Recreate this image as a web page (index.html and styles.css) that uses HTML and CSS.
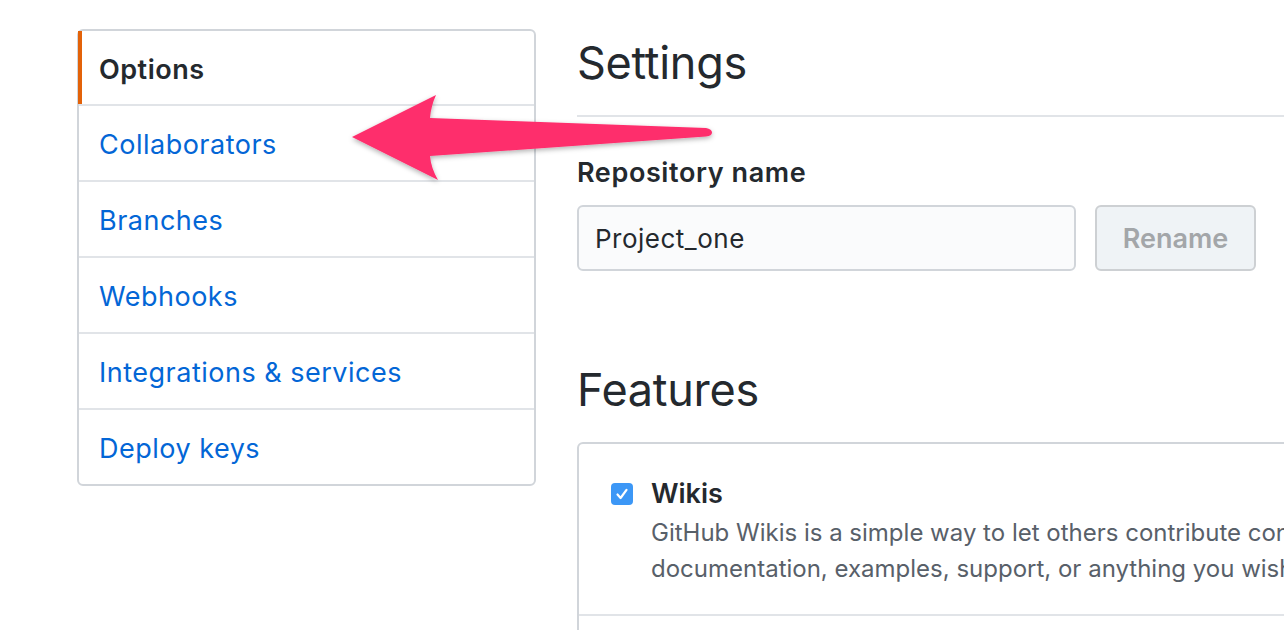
FILE: index.html
```html
<!DOCTYPE html>
<html>
<head>
<meta charset="utf-8">
<link rel="stylesheet" href="styles.css">
</head>
<body>
<div class="page">
  <nav class="menu">
    <a class="menu-item selected">Options</a>
    <a class="menu-item">Collaborators</a>
    <a class="menu-item">Branches</a>
    <a class="menu-item">Webhooks</a>
    <a class="menu-item">Integrations &amp; services</a>
    <a class="menu-item">Deploy keys</a>
  </nav>
  <main class="main">
    <h2 class="subhead">Settings</h2>
    <label class="label">Repository name</label>
    <div class="rename-row">
      <div class="input">Project_one</div>
      <div class="btn">Rename</div>
    </div>
    <h2 class="subhead spacious">Features</h2>
    <div class="box">
      <div class="box-row">
        <span class="checkbox">
          <svg width="22" height="22" viewBox="0 0 22 22"><rect width="22" height="22" rx="4" fill="#3c97f6"/><path d="M6.5 11.5 L9.6 15 L15.5 6.8" fill="none" stroke="#fff" stroke-width="2.2" stroke-linecap="round" stroke-linejoin="round"/></svg>
        </span>
        <div class="feature">
          <div class="feature-title">Wikis</div>
          <p class="feature-desc">GitHub Wikis is a simple way to let others contribute content. Any GitHub user can create and edit pages to use for<br>documentation, examples, support, or anything you wish.</p>
        </div>
      </div>
      <div class="box-row empty"></div>
    </div>
  </main>
</div>
<svg class="arrow" width="1284" height="630" viewBox="0 0 1284 630">
  <defs>
    <filter id="sh" x="-10%" y="-30%" width="120%" height="160%">
      <feDropShadow dx="0" dy="2" stdDeviation="2.5" flood-color="#000" flood-opacity="0.3"/>
    </filter>
  </defs>
  <path filter="url(#sh)" fill="#fe2d6c" d="M352,137 L436,95 Q431,106 430,118 L706,128 Q712,129 712,132.5 Q712,136 706,136.5 L430,156 Q431,168 438,180 Z"/>
</svg>
</body>
</html>
```

FILE: styles.css
```css
html, body {
  margin: 0;
  padding: 0;
  background: #fff;
  overflow: hidden;
}
body {
  width: 1284px;
  height: 630px;
  position: relative;
  font-family: Inter, "Noto Sans", "Liberation Sans", sans-serif;
  color: #24292e;
}
.page {
  display: flex;
  align-items: flex-start;
  padding: 29px 0 0 77px;
  gap: 41px;
  width: 2400px;
}
.menu {
  width: 459px;
  box-sizing: border-box;
  border: 2px solid #d1d5da;
  border-radius: 6px;
  display: flex;
  flex-direction: column;
  flex-shrink: 0;
}
.menu-item {
  display: flex;
  align-items: center;
  height: 74px;
  box-sizing: border-box;
  padding-left: 20px;
  padding-top: 3px;
  font-size: 27px;
  color: #0366d6;
  border-top: 2px solid #e1e4e8;
  letter-spacing: 0.5px;
  height: 76px;
}
.menu-item:first-child {
  border-top: none;
  height: 73px;
}
.menu-item.selected {
  font-weight: 600;
  color: #24292e;
  box-shadow: inset 4px 0 0 #e36209;
  margin-left: -1px;
  padding-left: 21px;
}
.main {
  width: 1400px;
  flex-shrink: 0;
}
.subhead {
  margin: 0;
  font-size: 45px;
  font-weight: 400;
  line-height: 60px;
  padding-top: 4px;
  padding-bottom: 22px;
  border-bottom: 2px solid #e1e4e8;
  letter-spacing: -0.3px;
}
.subhead.spacious {
  border-bottom: none;
  margin-top: 84px;
  padding-top: 5px;
  padding-bottom: 22px;
}
.label {
  display: block;
  margin-top: 35px;
  font-size: 27px;
  font-weight: 600;
  line-height: 42px;
  letter-spacing: 0.6px;
}
.rename-row {
  display: flex;
  gap: 19px;
  margin-top: 11px;
}
.input {
  width: 499px;
  height: 66px;
  box-sizing: border-box;
  border: 2px solid #d1d5da;
  border-radius: 6px;
  background: #fafbfc;
  padding-left: 16px;
  display: flex;
  align-items: center;
  font-size: 26px;
  letter-spacing: 0.5px;
  color: #24292e;
}
.btn {
  width: 161px;
  height: 66px;
  box-sizing: border-box;
  border: 2px solid #cdd0d3;
  border-radius: 6px;
  background: #eff3f6;
  display: flex;
  align-items: center;
  justify-content: center;
  font-size: 27px;
  font-weight: 600;
  color: #a3a6a9;
}
.box {
  width: 1400px;
  box-sizing: border-box;
  border: 2px solid #d1d5da;
  border-radius: 6px;
}
.box-row {
  display: flex;
  align-items: flex-start;
  gap: 18px;
  padding: 29px 32px 27px 32px;
  border-bottom: 2px solid #e1e4e8;
}
.box-row.empty {
  border-bottom: none;
  height: 80px;
}
.checkbox {
  display: flex;
  margin-top: 10px;
}
.feature-title {
  font-size: 27px;
  font-weight: 600;
  line-height: 42px;
}
.feature-desc {
  margin: 0;
  white-space: nowrap;
  font-size: 24px;
  line-height: 36px;
  color: #586069;
}
.arrow {
  position: absolute;
  left: 0;
  top: 0;
  pointer-events: none;
}
```
